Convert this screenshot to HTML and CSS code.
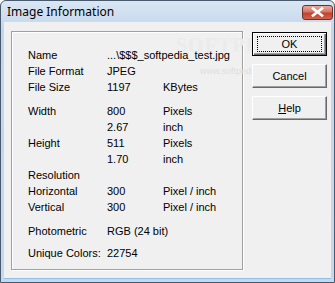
FILE: index.html
```html
<!DOCTYPE html>
<html lang="en">
<head>
    <meta charset="UTF-8">
    <title>Image Information</title>
    <link rel="stylesheet" href="styles.css">
</head>
<body>
<div class="window">
    <div class="titlebar">
        <span class="title">Image Information</span>
        <span class="close">
            <svg width="13" height="10" viewBox="0 0 13 10">
                <path d="M2 1.5 L11 8.5 M11 1.5 L2 8.5" stroke="#fff" stroke-width="2.6" stroke-linecap="square"/>
            </svg>
        </span>
    </div>
    <div class="client">
        <div class="panel">
            <div class="mark">SOFTPEDIA<sup>™</sup></div>
            <div class="mark-url">www.softpedia.com</div>
            <div class="info">
                <span>Name</span><span class="wide">...\$$$_softpedia_test.jpg</span>
                <span>File Format</span><span>JPEG</span><span></span>
                <span>File Size</span><span>1197</span><span>KBytes</span>
            </div>
            <div class="info gap">
                <span>Width</span><span>800</span><span>Pixels</span>
                <span></span><span>2.67</span><span>inch</span>
                <span>Height</span><span>511</span><span>Pixels</span>
                <span></span><span>1.70</span><span>inch</span>
                <span>Resolution</span><span></span><span></span>
                <span>Horizontal</span><span>300</span><span>Pixel / inch</span>
                <span>Vertical</span><span>300</span><span>Pixel / inch</span>
            </div>
            <div class="info gap">
                <span>Photometric</span><span class="wide">RGB (24 bit)</span>
            </div>
            <div class="info gap2">
                <span>Unique Colors:</span><span class="wide">22754</span>
            </div>
        </div>
        <div class="buttons">
            <button class="btn default"><span class="focus">OK</span></button>
            <button class="btn">Cancel</button>
            <button class="btn"><u>H</u>elp</button>
        </div>
    </div>
</div>
</body>
</html>
```

FILE: styles.css
```css
body {
    margin: 0;
    background: #fff;
}
.window {
    width: 335px;
    height: 283px;
    box-sizing: border-box;
    border: 1px solid #4a5a6e;
    border-radius: 6px 6px 0 0;
    background: linear-gradient(#dae6f3, #c2d6ec 30px, #c4d8ee);
    display: flex;
    flex-direction: column;
    overflow: hidden;
}
.titlebar {
    height: 21px;
    display: flex;
    align-items: center;
    padding: 0 1px 0 6px;
}
.title {
    font-family: "Noto Sans", sans-serif;
    font-size: 12px;
    color: #000;
    margin-top: -1px;
}
.close {
    margin-left: auto;
    width: 31px;
    height: 15px;
    box-sizing: border-box;
    border: 1px solid #6e3128;
    border-radius: 3px;
    background: linear-gradient(#e6aa9c, #d27766 45%, #c2402f 55%, #d2624c);
    display: flex;
    align-items: center;
    justify-content: center;
    margin-top: 1px;
}
.client {
    flex: 1;
    margin: 0 3px 3px 3px;
    background: #f0f0f0;
    display: flex;
    padding: 9px 0 0 7px;
    border-bottom: 1px solid #8fbfe4;
}
.panel {
    position: relative;
    width: 232px;
    height: 239px;
    box-sizing: border-box;
    border: 1px solid #a0a0a0;
    box-shadow: 1px 1px 0 #fff, inset 1px 1px 0 #fff;
    padding: 15px 0 0 16px;
}
.info {
    position: relative;
    display: grid;
    grid-template-columns: 79px 56px 1fr;
    grid-auto-rows: 16px;
    font-family: "Liberation Sans", Arial, sans-serif;
    font-size: 11px;
    line-height: 16px;
    color: #000;
}
.info .wide {
    grid-column: span 2;
}
.info.gap {
    margin-top: 8px;
}
.info.gap2 {
    margin-top: 6px;
}
.mark {
    position: absolute;
    left: 164px;
    top: 2px;
    font-family: "Liberation Serif", serif;
    font-size: 20px;
    font-weight: bold;
    letter-spacing: 1px;
    color: #ebebeb;
    white-space: nowrap;
}
.mark sup {
    font-size: 7px;
}
.mark-url {
    position: absolute;
    left: 188px;
    top: 34px;
    font-family: "Liberation Sans", Arial, sans-serif;
    font-size: 9px;
    color: #dedede;
    white-space: nowrap;
}
.buttons {
    position: relative;
    display: flex;
    flex-direction: column;
    gap: 8px;
    margin-left: 9px;
    margin-top: 1px;
}
.btn {
    width: 75px;
    height: 24px;
    box-sizing: border-box;
    margin: 0;
    padding: 0;
    font-family: "Liberation Sans", Arial, sans-serif;
    font-size: 11px;
    line-height: 13px;
    color: #000;
    background: #f0f0f0;
    border: 1px solid;
    border-color: #fff #696969 #696969 #fff;
    box-shadow: inset -1px -1px 0 #a0a0a0;
}
.btn.default {
    border: 1px solid #000;
    box-shadow: inset 1px 1px 0 #fff, inset -1px -1px 0 #696969, inset -2px -2px 0 #a0a0a0;
    padding: 3px 4px;
}
.focus {
    display: flex;
    align-items: center;
    justify-content: center;
    height: 100%;
    border: 1px dotted #000;
    box-sizing: border-box;
}
```
